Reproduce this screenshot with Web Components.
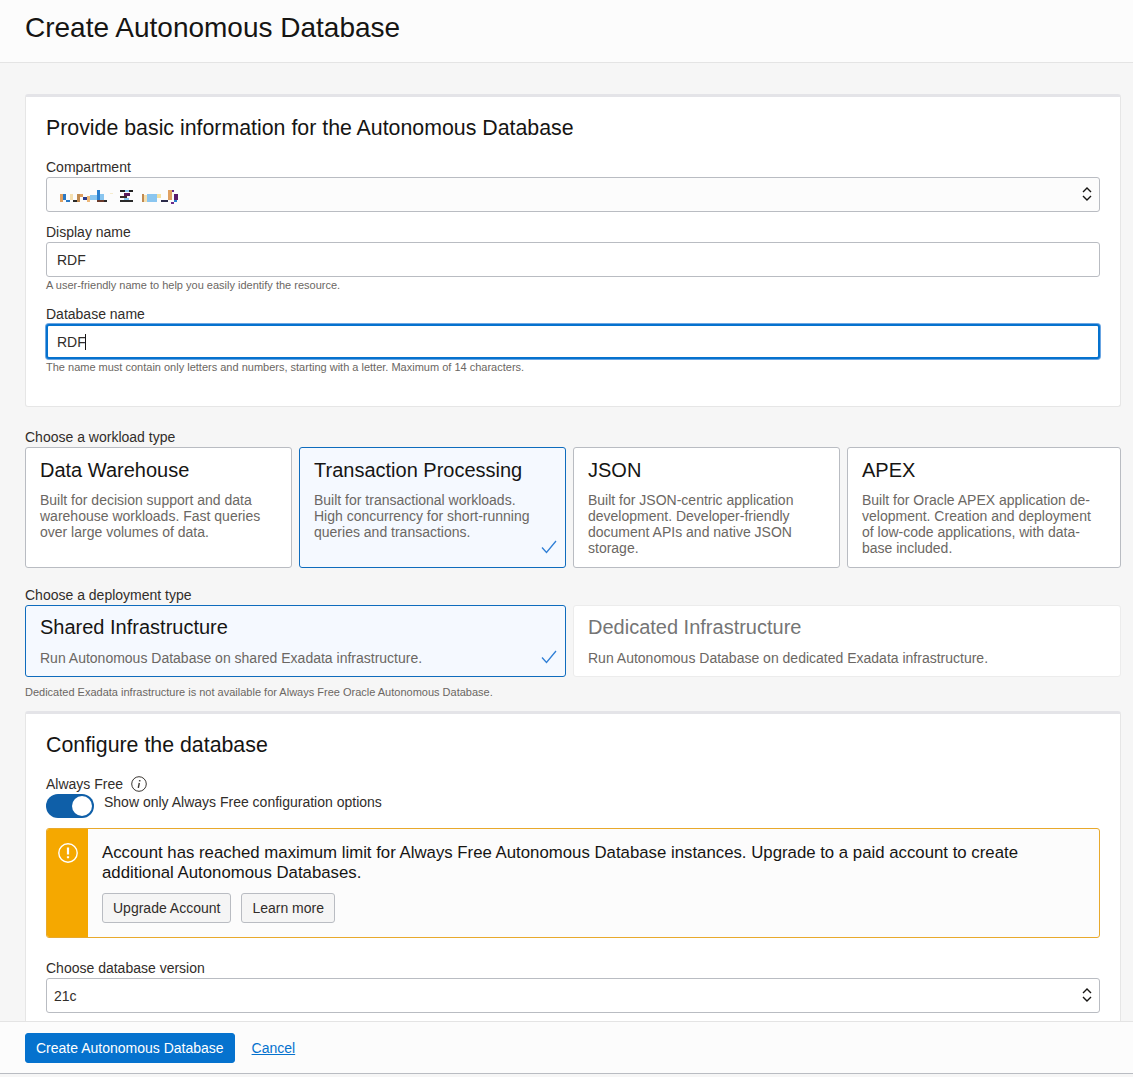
<!DOCTYPE html>
<html lang="en">
<head>
<meta charset="utf-8">
<title>Create Autonomous Database</title>
<style>
  html, body { margin: 0; height: 100%; }
  body { font: 14px/16px "Liberation Sans", Arial, sans-serif; color: #312d2a; background: #f6f6f6; overflow: hidden; }
</style>
</head>
<body>
<db-page>
  <page-header slot="header">Create Autonomous Database</page-header>

  <form-panel heading="Provide basic information for the Autonomous Database" style="height:313px">
    <form-field label="Compartment">
      <select-box shaded><pixel-blur></pixel-blur></select-box>
    </form-field>
    <form-field label="Display name" help="A user-friendly name to help you easily identify the resource." style="margin-top:12px">
      <text-box>RDF</text-box>
    </form-field>
    <form-field label="Database name" help="The name must contain only letters and numbers, starting with a letter. Maximum of 14 characters." style="margin-top:14px">
      <text-box focused>RDF</text-box>
    </form-field>
  </form-panel>

  <tile-group label="Choose a workload type" columns="267px 267px 267px 1fr" style="margin-top:22px">
    <choice-tile heading="Data Warehouse" style="height:121px">Built for decision support and data warehouse workloads. Fast queries over large volumes of data.</choice-tile>
    <choice-tile heading="Transaction Processing" selected style="height:121px">Built for transactional workloads.<br>High concurrency for short-running queries and transactions.</choice-tile>
    <choice-tile heading="JSON" style="height:121px">Built for JSON-centric application development. Developer-friendly document APIs and native JSON storage.</choice-tile>
    <choice-tile heading="APEX" style="height:121px">Built for Oracle APEX application de-<br>velopment. Creation and deployment of low-code applications, with data-<br>base included.</choice-tile>
  </tile-group>

  <tile-group label="Choose a deployment type" columns="541px 1fr" style="margin-top:19px">
    <choice-tile heading="Shared Infrastructure" selected compact style="height:72px">Run Autonomous Database on shared Exadata infrastructure.</choice-tile>
    <choice-tile heading="Dedicated Infrastructure" disabled compact style="height:72px">Run Autonomous Database on dedicated Exadata infrastructure.</choice-tile>
  </tile-group>
  <help-text style="margin-top:8px">Dedicated Exadata infrastructure is not available for Always Free Oracle Autonomous Database.</help-text>

  <form-panel heading="Configure the database" style="margin-top:12px;padding-bottom:40px">
    <always-free></always-free>
    <warn-box style="margin-top:10px">
      Account has reached maximum limit for Always Free Autonomous Database instances. Upgrade to a paid account to create additional Autonomous Databases.
      <plain-button slot="actions">Upgrade Account</plain-button>
      <plain-button slot="actions">Learn more</plain-button>
    </warn-box>
    <form-field label="Choose database version" style="margin-top:22px">
      <select-box>21c</select-box>
    </form-field>
  </form-panel>

  <page-footer slot="footer">
    <plain-button primary>Create Autonomous Database</plain-button>
    <a href="#" style="margin-left:17px;color:#0572ce">Cancel</a>
  </page-footer>
</db-page>

<script>
// Helper: abre el shadow root del componente y le pone su estilo y markup
function shadow(el, html) {
  el.attachShadow({ mode: "open" }).innerHTML = html;
}

// Columna de la página: cabecera, contenido recortado y pie
class DbPage extends HTMLElement {
  connectedCallback() {
    shadow(this, `
<style>
  :host { display: flex; flex-direction: column; height: 1077px; }
  main { flex: 1; min-height: 0; overflow: hidden; padding: 31px 12px 0 25px; }
</style>
<slot name="header"></slot>
<main><slot></slot></main>
<slot name="footer"></slot>`);
  }
}

class PageHeader extends HTMLElement {
  connectedCallback() {
    shadow(this, `
<style>
  :host { display: block; height: 62px; box-sizing: content-box; padding-left: 25px; background: #fcfcfc; border-bottom: 1px solid #e4e4e4; font-size: 28px; line-height: 56px; color: #161513; }
</style>
<slot></slot>`);
  }
}

class PageFooter extends HTMLElement {
  connectedCallback() {
    shadow(this, `
<style>
  :host { display: flex; align-items: center; box-sizing: border-box; height: 53px; margin-bottom: 3px; padding: 0 25px; background: #fcfcfc; border-top: 1px solid #e4e4e4; border-bottom: 1px solid #b9bcc2; }
</style>
<slot></slot>`);
  }
}

// Tarjeta blanca con el borde superior grueso
class FormPanel extends HTMLElement {
  connectedCallback() {
    shadow(this, `
<style>
  :host { display: block; box-sizing: border-box; background: #fff; border: 1px solid #e6e6e6; border-top: 3px solid #e4e4e8; border-radius: 3px; padding: 19px 20px 0; }
  h2 { margin: 0 0 18px; font: 400 21.33px/25px "Liberation Sans", Arial, sans-serif; color: #161513; }
</style>
<h2>${this.getAttribute("heading")}</h2>
<slot></slot>`);
  }
}

class FormField extends HTMLElement {
  connectedCallback() {
    const help = this.getAttribute("help");
    shadow(this, `
<style>
  :host { display: block; }
  label { display: block; height: 16px; line-height: 16px; margin-bottom: 2px; }
  help-text { margin-top: 1px; }
</style>
<label>${this.getAttribute("label")}</label>
<slot></slot>
${help ? `<help-text>${help}</help-text>` : ""}`);
  }
}

class HelpText extends HTMLElement {
  connectedCallback() {
    shadow(this, `
<style>
  :host { display: block; font-size: 11px; line-height: 14px; color: #6b6763; }
</style>
<slot></slot>`);
  }
}

class TextBox extends HTMLElement {
  connectedCallback() {
    const focused = this.hasAttribute("focused");
    shadow(this, `
<style>
  :host { display: flex; align-items: center; box-sizing: border-box; height: 35px; padding: 0 10px; background: #fff; border: 1px solid #b9bcc2; border-radius: 3px; color: #312d2a; }
  :host([focused]) { border: 2px solid #0572ce; box-shadow: 0 0 0 1px #6ba6e3; padding: 0 9px; }
  i { display: inline-block; width: 1px; height: 16px; background: #161513; margin-left: -1px; }
</style>
<slot></slot>${focused ? "<i></i>" : ""}`);
  }
}

class SelectBox extends HTMLElement {
  connectedCallback() {
    shadow(this, `
<style>
  :host { display: flex; align-items: center; box-sizing: border-box; height: 35px; padding: 0 7px; background: #fff; border: 1px solid #b9bcc2; border-radius: 3px; }
  :host([shaded]) { background: #fcfcfc; }
  .v { flex: 1; }
  svg { display: block; margin-top: -1px; }
</style>
<div class="v"><slot></slot></div>
<svg width="10" height="16" viewBox="0 0 10 16" fill="none" stroke="#161513" stroke-width="1.4">
  <path d="M1 6 L5 2 L9 6"/><path d="M1 10 L5 14 L9 10"/>
</svg>`);
  }
}

// Texto pixelado del compartimento (en la captura está censurado)
class PixelBlur extends HTMLElement {
  connectedCallback() {
    const cells = [
      [0,4,3,8,"#e0a060"],[3,4,3,6,"#2a78c4"],[6,10,4,2,"#2a78c4"],[10,4,3,6,"#f5e0b0"],[13,10,4,2,"#2a2a2a"],
      [17,4,3,8,"#c08a50"],[20,4,3,3,"#e0a060"],[23,7,4,3,"#2a3a8a"],[27,6,3,6,"#eeb878"],[30,5,7,5,"#8ac6f0"],
      [37,0,3,10,"#2a80d0"],[40,4,4,6,"#8ac6f0"],[37,10,7,2,"#6a3a2a"],[44,10,3,2,"#2a2a2a"],[50,3,3,1,"#f5ecd0"],
      [60,0,5,2,"#222"],[65,0,4,2,"#8ac6f0"],[69,0,4,2,"#222"],[64,3,6,3,"#5a1a5a"],[60,6,7,2,"#3a2a2a"],
      [64,8,5,2,"#8ac6f0"],[60,10,13,2,"#2a2a2a"],
      [82,4,2,8,"#c08a50"],[84,5,3,7,"#f5e0b0"],[87,4,10,8,"#8ac6f0"],[97,4,4,4,"#f5e0a0"],
      [101,10,7,2,"#2a2a4a"],[108,0,4,10,"#e0a060"],[112,0,2,2,"#6a2a8a"],[114,4,4,6,"#5a1a6a"],
      [114,10,3,2,"#2a80d0"],[111,12,3,2,"#6a2a8a"]
    ];
    const rects = cells.map(([x, y, w, h, c]) => `<rect x="${x}" y="${y}" width="${w}" height="${h}" fill="${c}"/>`).join("");
    shadow(this, `
<style>
  :host { display: block; padding: 5px 0 0 6px; }
  svg { display: block; }
</style>
<svg width="118" height="14" viewBox="0 0 118 14" shape-rendering="crispEdges">${rects}</svg>`);
  }
}

class TileGroup extends HTMLElement {
  connectedCallback() {
    shadow(this, `
<style>
  :host { display: block; }
  label { display: block; height: 18px; line-height: 16px; }
  div { display: grid; grid-template-columns: ${this.getAttribute("columns")}; gap: 7px; }
</style>
<label>${this.getAttribute("label")}</label>
<div><slot></slot></div>`);
  }
}

class ChoiceTile extends HTMLElement {
  connectedCallback() {
    const check = this.hasAttribute("selected")
      ? `<svg viewBox="0 0 16 14" width="16" height="14" fill="none" stroke="#2f7fd6" stroke-width="1.3"><path d="M1 7.5 L5.5 12.5 L15 1"/></svg>`
      : "";
    shadow(this, `
<style>
  :host { display: block; position: relative; box-sizing: border-box; padding: 10px 14px 0; background: #fff; border: 1px solid #b9bcc2; border-radius: 3px; }
  :host([compact]) { padding-top: 9px; }
  :host([selected]) { background: #f5f9ff; border-color: #0f6cbd; }
  :host([disabled]) { border-color: #ececec; }
  h3 { margin: 0 0 10px; font: 400 20px/24px "Liberation Sans", Arial, sans-serif; color: #161513; }
  :host([compact]) h3 { margin-bottom: 11px; }
  :host([disabled]) h3 { color: #757575; }
  p { margin: 0; color: #6b6763; }
  svg { position: absolute; right: 8px; bottom: 13px; }
  :host([compact]) svg { bottom: 12px; }
</style>
<h3>${this.getAttribute("heading")}</h3>
<p><slot></slot></p>
${check}`);
  }
}

class AlwaysFree extends HTMLElement {
  connectedCallback() {
    shadow(this, `
<style>
  :host { display: block; margin-top: -1px; }
  .top { display: flex; align-items: center; gap: 8px; height: 18px; }
  .row { display: flex; align-items: flex-start; gap: 10px; margin-top: 1px; }
  .sw { display: block; box-sizing: border-box; width: 48px; height: 24px; padding: 2px 2px 2px 26px; border-radius: 12px; background: #0f5fa8; }
  .sw b { display: block; width: 20px; height: 20px; border-radius: 50%; background: #fff; }
  .row span { line-height: 16px; }
  svg { display: block; }
</style>
<div class="top">Always Free
  <svg width="16" height="16" viewBox="0 0 16 16" fill="none" stroke="#3a3632"><circle cx="8" cy="8" r="7.3"/><path d="M8.7 4.1v1.3" stroke-width="1.6"/><path d="M8.3 7 L7.3 11.8" stroke-width="1.4"/></svg>
</div>
<div class="row"><div class="sw"><b></b></div><span>Show only Always Free configuration options</span></div>`);
  }
}

class WarnBox extends HTMLElement {
  connectedCallback() {
    shadow(this, `
<style>
  :host { display: flex; box-sizing: border-box; height: 110px; background: #fcfcfc; border: 1px solid #e8a92c; border-radius: 3px; overflow: hidden; font-size: 16.8px; line-height: 20px; color: #161513; }
  .bar { flex: none; width: 42px; margin: -1px 0 -1px -1px; padding: 15px 0 0 12px; box-sizing: border-box; background: #f5a800; }
  .bar + .body { flex: 1; padding: 14px 40px 0 14px; }
  .act { display: flex; gap: 10px; margin-top: 10px; }
  svg { display: block; }
</style>
<div class="bar">
  <svg width="20" height="20" viewBox="0 0 20 20" fill="none" stroke="#fff" stroke-width="1.4"><circle cx="10" cy="10" r="9.2"/><path d="M10 4.6v7" stroke-width="2.2"/><path d="M10 13.2v2" stroke-width="2.2"/></svg>
</div>
<div class="body"><slot></slot><div class="act"><slot name="actions"></slot></div></div>`);
  }
}

class PlainButton extends HTMLElement {
  connectedCallback() {
    shadow(this, `
<style>
  :host { display: inline-flex; align-items: center; box-sizing: border-box; height: 30px; padding: 0 10px; background: #f5f5f5; border: 1px solid #b9bcc2; border-radius: 3px; font-size: 14px; color: #312d2a; }
  :host([primary]) { background: #0572ce; border-color: #0572ce; color: #fff; }
</style>
<slot></slot>`);
  }
}

customElements.define("db-page", DbPage);
customElements.define("page-header", PageHeader);
customElements.define("page-footer", PageFooter);
customElements.define("form-panel", FormPanel);
customElements.define("form-field", FormField);
customElements.define("help-text", HelpText);
customElements.define("text-box", TextBox);
customElements.define("select-box", SelectBox);
customElements.define("pixel-blur", PixelBlur);
customElements.define("tile-group", TileGroup);
customElements.define("choice-tile", ChoiceTile);
customElements.define("always-free", AlwaysFree);
customElements.define("warn-box", WarnBox);
customElements.define("plain-button", PlainButton);
</script>
</body>
</html>
